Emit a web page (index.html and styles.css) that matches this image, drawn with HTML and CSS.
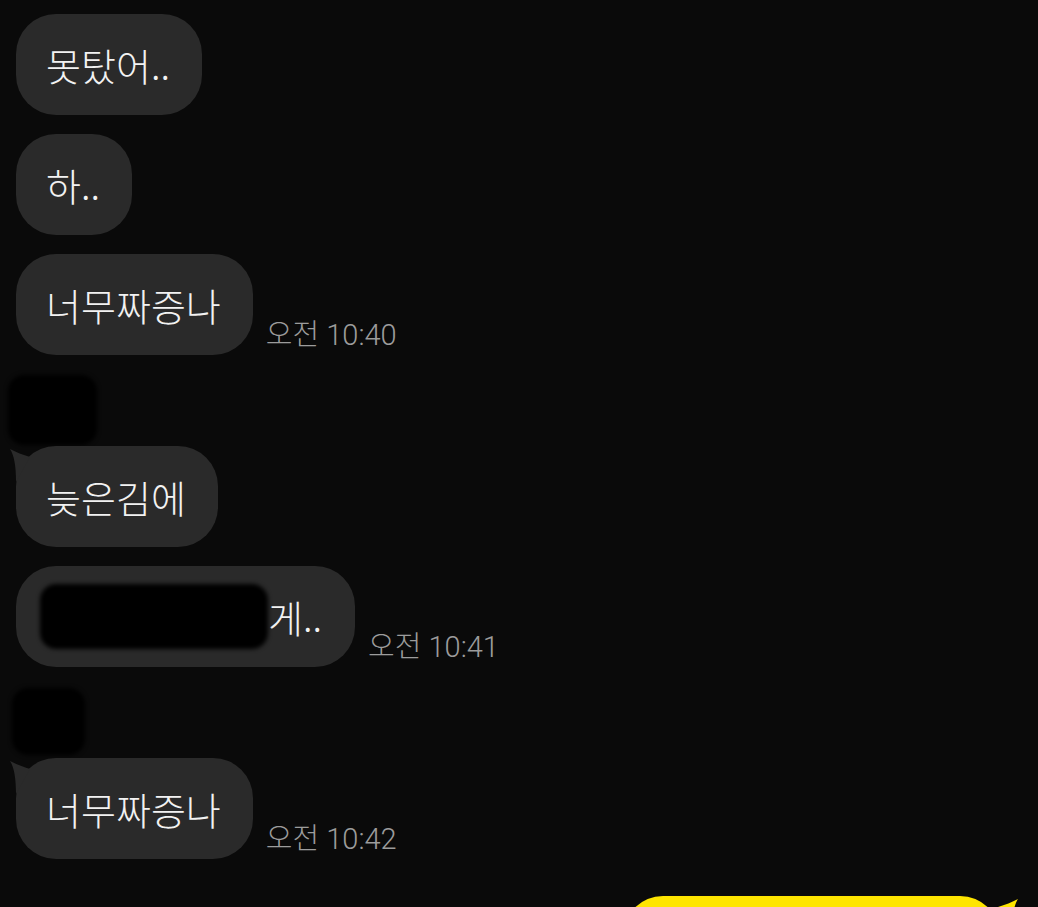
FILE: index.html
```html
<!DOCTYPE html>
<html lang="ko">
<head>
  <meta charset="UTF-8">
  <meta name="viewport" content="width=device-width, initial-scale=1.0">
  <title>채팅</title>
  <link rel="stylesheet" href="styles.css">
</head>
<body>

  <div class="chat">
    <div class="row"><div class="bubble">못탔어..</div></div>
    <div class="row"><div class="bubble">하..</div></div>
    <div class="row">
      <div class="bubble">너무짜증나</div>
      <span class="time">오전 10:40</span>
    </div>

    <div class="group">
      <div class="sender sender-a"></div>
      <div class="row">
        <div class="bubble tail">
          <svg class="tail-svg" width="30" height="36" viewBox="0 0 30 36"><path d="M2 3 C8 6 15 9 22 11 L8 36 C8 20 6 9 2 3 Z" fill="#2a2a2a"/></svg>
          늦은김에
        </div>
      </div>
      <div class="row">
        <div class="bubble bubble-hidden"><span class="blot"></span>게..</div>
        <span class="time">오전 10:41</span>
      </div>
    </div>

    <div class="group">
      <div class="sender sender-b"></div>
      <div class="row">
        <div class="bubble tail">
          <svg class="tail-svg" width="30" height="36" viewBox="0 0 30 36"><path d="M2 3 C8 6 15 9 22 11 L8 36 C8 20 6 9 2 3 Z" fill="#2a2a2a"/></svg>
          너무짜증나
        </div>
        <span class="time">오전 10:42</span>
      </div>
    </div>

    <div class="row mine">
      <div class="bubble yellow">
        <svg class="tail-mine" width="30" height="36" viewBox="0 0 30 36"><path d="M28 3 C22 6 15 9 8 11 L22 36 C22 20 24 9 28 3 Z" fill="#fee500"/></svg>
      </div>
    </div>
  </div>

</body>
</html>
```

FILE: styles.css
```css
* {
  margin: 0;
  padding: 0;
  box-sizing: border-box;
}

body {
  width: 1038px;
  height: 907px;
  background: #0a0a0a;
  font-family: 'Noto Sans CJK KR', 'Noto Sans', sans-serif;
  overflow: hidden;
}

.chat {
  display: flex;
  flex-direction: column;
  gap: 19px;
  padding: 14px 0 0 16px;
}

.row {
  display: flex;
  align-items: flex-end;
  gap: 13px;
}

.group {
  display: flex;
  flex-direction: column;
  gap: 19px;
}

.bubble {
  position: relative;
  display: flex;
  align-items: center;
  height: 101px;
  padding: 0 32px 0 30px;
  border-radius: 40px;
  background: #2a2a2a;
  color: #f2f2f2;
  font-size: 38px;
  font-weight: 300;
  white-space: nowrap;
}

.tail-svg {
  position: absolute;
  left: -8px;
  top: 0;
}

.bubble-hidden {
  padding-left: 24px;
  padding-right: 33px;
}

/* 가림 처리 */
.blot {
  display: inline-block;
  width: 228px;
  height: 65px;
  background: #000;
  border-radius: 16px;
  filter: blur(2px);
}

.sender {
  background: #000;
  border-radius: 16px;
  filter: blur(2px);
}

.sender-a {
  width: 89px;
  height: 70px;
  margin: 1px 0 -18px -8px;
}

.sender-b {
  width: 73px;
  height: 67px;
  margin: 2px 0 -16px -4px;
}

.time {
  margin-bottom: 2px;
  color: #9c9c9c;
  font-family: Roboto, 'Noto Sans CJK KR', sans-serif;
  font-size: 29px;
  font-weight: 300;
  white-space: nowrap;
}

.mine {
  justify-content: flex-end;
  padding-right: 38px;
  margin-top: 18px;
}

.yellow {
  width: 377px;
  background: #fee500;
  color: #111;
}

.tail-mine {
  position: absolute;
  right: -20px;
  top: 0;
}
```
